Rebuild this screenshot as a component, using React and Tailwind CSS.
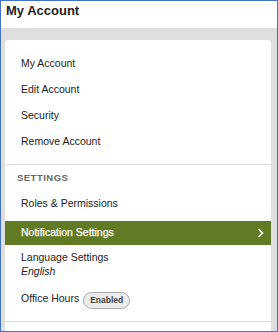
import React from "react";

const font = { fontFamily: '"Liberation Sans", Arial, sans-serif' };

function Item({ children, className = "" }) {
  return (
    <div className={"h-[26px] flex items-center pl-[16px] text-[10.5px] text-[#222] " + className}>
      {children}
    </div>
  );
}

export default function App() {
  return (
    <div style={font} className="w-[278px] h-[332px] overflow-hidden border border-[#4472c4] bg-[#dedede] flex flex-col">
      <div className="h-[27px] bg-white pl-[5px] pt-[2px] shrink-0">
        <span className="block text-[13px] leading-[15px] font-bold text-[#222]">My Account</span>
      </div>
      <div className="flex-1 pt-[12px] pl-[4px] pr-[6px]">
        <div className="bg-white rounded-t-[3px] h-full flex flex-col">
          <div className="pt-[11px] pb-[9px]">
            <Item>My Account</Item>
            <Item>Edit Account</Item>
            <Item>Security</Item>
            <Item>Remove Account</Item>
          </div>
          <div className="border-t border-[#dcdcdc]" />
          <div>
            <div className="h-[26px] flex items-center pl-[12px] text-[9.5px] font-bold tracking-[0.05em] text-[#666]">
              SETTINGS
            </div>
            <Item className="mb-[4px]">Roles &amp; Permissions</Item>
            <div className="h-[24px] bg-[#617b24] flex items-center justify-between pl-[16px] pr-[7px] text-[10.5px] text-white [-webkit-text-stroke:0.25px_white]">
              <span>Notification Settings</span>
              <svg width="7" height="10" viewBox="0 0 7 10">
                <path d="M1.5 1 L5.5 5 L1.5 9" fill="none" stroke="white" strokeWidth="1.6" />
              </svg>
            </div>
            <div className="pl-[16px] pt-[5px] text-[10.5px] text-[#222] leading-[14px]">
              <div>Language Settings</div>
              <div className="italic">English</div>
            </div>
            <div className="pl-[16px] pt-[11px] pb-[12px] flex items-center gap-[4px] text-[10.5px] text-[#222]">
              <span>Office Hours</span>
              <span className="rounded-full border border-[#aaa] bg-[#ececec] px-[6px] h-[17px] mt-[3px] flex items-center text-[8.5px] font-bold text-[#444]">
                Enabled
              </span>
            </div>
            <div className="border-t border-[#dcdcdc]" />
          </div>
        </div>
      </div>
    </div>
  );
}
